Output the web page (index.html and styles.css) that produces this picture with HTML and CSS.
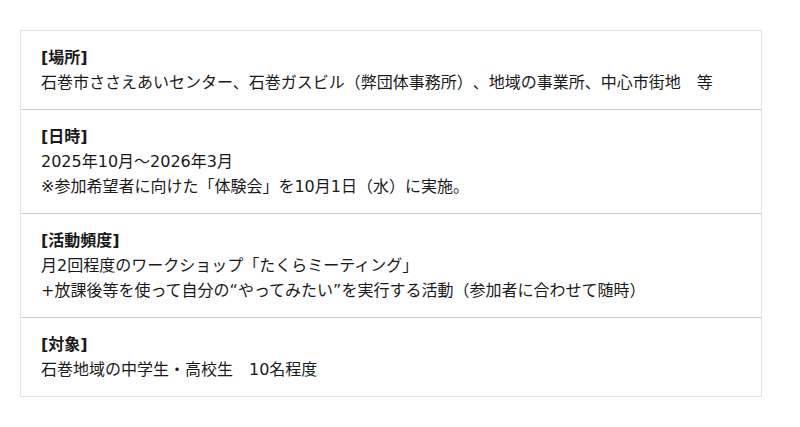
FILE: index.html
```html
<!DOCTYPE html>
<html lang="ja">
<head>
<meta charset="utf-8">
<link rel="stylesheet" href="styles.css">
</head>
<body>
<div class="page">
  <div class="info">
    <div class="row">
      <div class="label">[場所]</div>
      <div class="text">石巻市ささえあいセンター、石巻ガスビル（弊団体事務所）、地域の事業所、中心市街地　等</div>
    </div>
    <div class="row">
      <div class="label">[日時]</div>
      <div class="text">2025年10月～2026年3月</div>
      <div class="text">※参加希望者に向けた「体験会」を10月1日（水）に実施。</div>
    </div>
    <div class="row">
      <div class="label">[活動頻度]</div>
      <div class="text">月2回程度のワークショップ「たくらミーティング」</div>
      <div class="text">+放課後等を使って自分の“やってみたい”を実行する活動（参加者に合わせて随時）</div>
    </div>
    <div class="row">
      <div class="label">[対象]</div>
      <div class="text">石巻地域の中学生・高校生　10名程度</div>
    </div>
  </div>
</div>
</body>
</html>
```

FILE: styles.css
```css
html, body {
  margin: 0;
  padding: 0;
  background: #ffffff;
}
.page {
  padding: 30px 20px;
  font-family: "DejaVu Sans", "Noto Sans CJK JP", sans-serif;
  font-size: 16px;
  line-height: 25px;
  color: #1a1a1a;
  text-spacing-trim: space-all;
}
.info {
  width: 742px;
  box-sizing: border-box;
  border: 1px solid #e2e2e2;
}
.row {
  padding: 14px 20px;
}
.row + .row {
  border-top: 1px solid #cccccc;
}
.label {
  font-weight: bold;
}
```
